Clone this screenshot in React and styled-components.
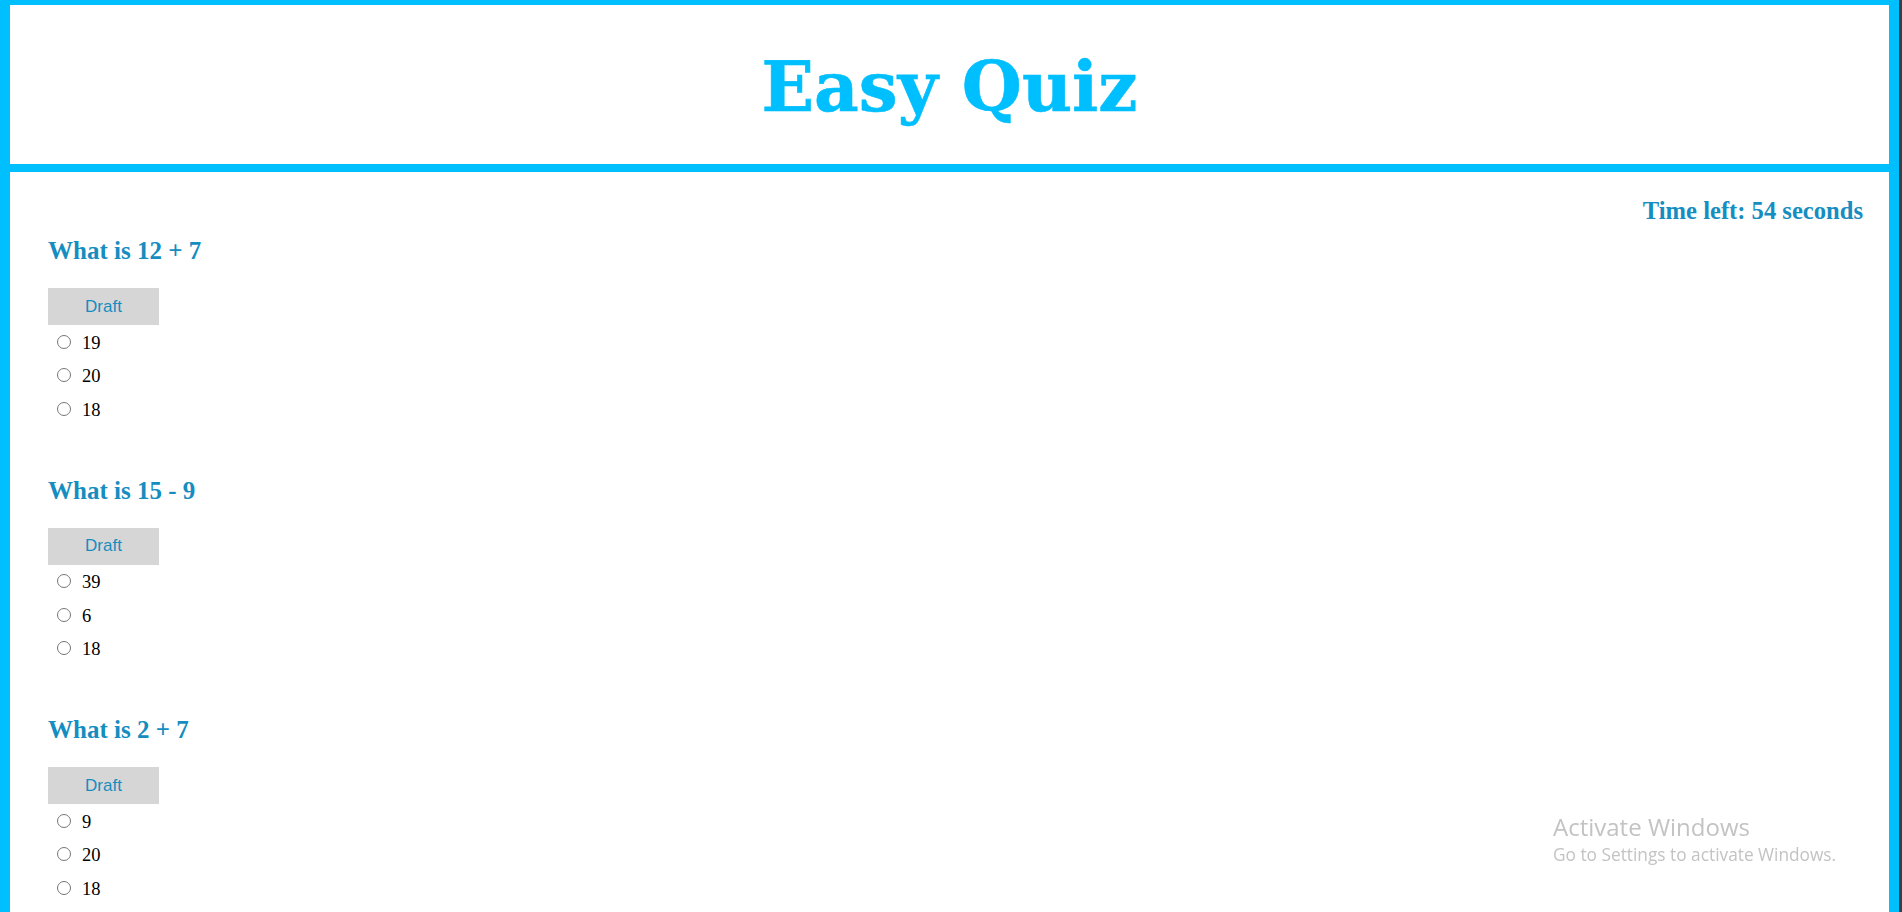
import React, { useState } from 'react'
import styled, { createGlobalStyle } from 'styled-components'

const GlobalStyle = createGlobalStyle`
  html, body {
    margin: 0;
    padding: 0;
    background: #fff;
  }
  body {
    font-family: "Liberation Serif", "Times New Roman", serif;
    overflow: hidden;
  }
`

const questions = [
  { id: 1, text: 'What is 12 + 7', options: ['19', '20', '18'] },
  { id: 2, text: 'What is 15 - 9', options: ['39', '6', '18'] },
  { id: 3, text: 'What is 2 + 7', options: ['9', '20', '18'] },
]

const Frame = styled.div`
  min-height: 912px;
  border-right: 3px solid #34404a;
  box-sizing: border-box;
`

const Page = styled.div`
  min-height: 912px;
  box-sizing: border-box;
  border-left: 10px solid #00bfff;
  border-right: 10px solid #00bfff;
  border-top: 5px solid #00bfff;
`

const Header = styled.header`
  height: 159px;
  display: flex;
  align-items: center;
  justify-content: center;
  border-bottom: 8px solid #00bfff;
`

const Title = styled.h1`
  margin: 0;
  padding-top: 3px;
  font-family: "DejaVu Serif", Georgia, serif;
  font-weight: 700;
  font-size: 69px;
  color: #00bfff;
  -webkit-text-stroke: 0.6px #00bfff;
`

const Content = styled.main`
  padding: 25px 26px 0 38px;
`

const Timer = styled.h2`
  margin: 0;
  text-align: right;
  font-size: 24.6px;
  font-weight: 700;
  line-height: 27px;
  color: #168dc0;
`

const QuizBlock = styled.section`
  margin-top: ${p => (p.first ? '11px' : '49px')};
`

const Question = styled.h2`
  margin: 0 0 24px;
  padding-top: 2px;
  font-size: 25px;
  font-weight: 700;
  line-height: 27px;
  color: #168dc0;
`

const DraftButton = styled.button`
  display: block;
  width: 111px;
  height: 37px;
  border: none;
  background: #d6d6d6;
  color: #168dc0;
  font-family: "Liberation Sans", Arial, sans-serif;
  font-size: 17px;
  padding: 0;
  cursor: pointer;
`

const Option = styled.label`
  display: flex;
  align-items: center;
  height: 33.5px;
  padding-left: 9px;
  font-size: 18.5px;
  color: #000;
`

const Radio = styled.input`
  width: 14px;
  height: 14px;
  margin: 0;
`

const OptionText = styled.span`
  margin-left: 11px;
  padding-top: 3px;
`

const Watermark = styled.div`
  position: fixed;
  left: 1553px;
  top: 811px;
  font-family: "Open Sans", "Noto Sans", sans-serif;
  color: #c3c3c3;
  pointer-events: none;
`

const WatermarkTitle = styled.div`
  font-size: 24px;
  line-height: 31px;
`

const WatermarkText = styled.div`
  font-size: 17.3px;
  line-height: 26px;
`

const App = () => {
  const [answers, setAnswers] = useState({})

  return (
    <>
      <GlobalStyle />
      <Frame>
        <Page>
          <Header>
            <Title>Easy Quiz</Title>
          </Header>
          <Content>
            <Timer>Time left: 54 seconds</Timer>
            {questions.map((q, i) => (
              <QuizBlock key={q.id} first={i === 0}>
                <Question>{q.text}</Question>
                <DraftButton type="button">Draft</DraftButton>
                {q.options.map(opt => (
                  <Option key={opt}>
                    <Radio
                      type="radio"
                      name={`q${q.id}`}
                      checked={answers[q.id] === opt}
                      onChange={() => setAnswers({ ...answers, [q.id]: opt })}
                    />
                    <OptionText>{opt}</OptionText>
                  </Option>
                ))}
              </QuizBlock>
            ))}
          </Content>
        </Page>
      </Frame>
      <Watermark>
        <WatermarkTitle>Activate Windows</WatermarkTitle>
        <WatermarkText>Go to Settings to activate Windows.</WatermarkText>
      </Watermark>
    </>
  )
}

export default App
